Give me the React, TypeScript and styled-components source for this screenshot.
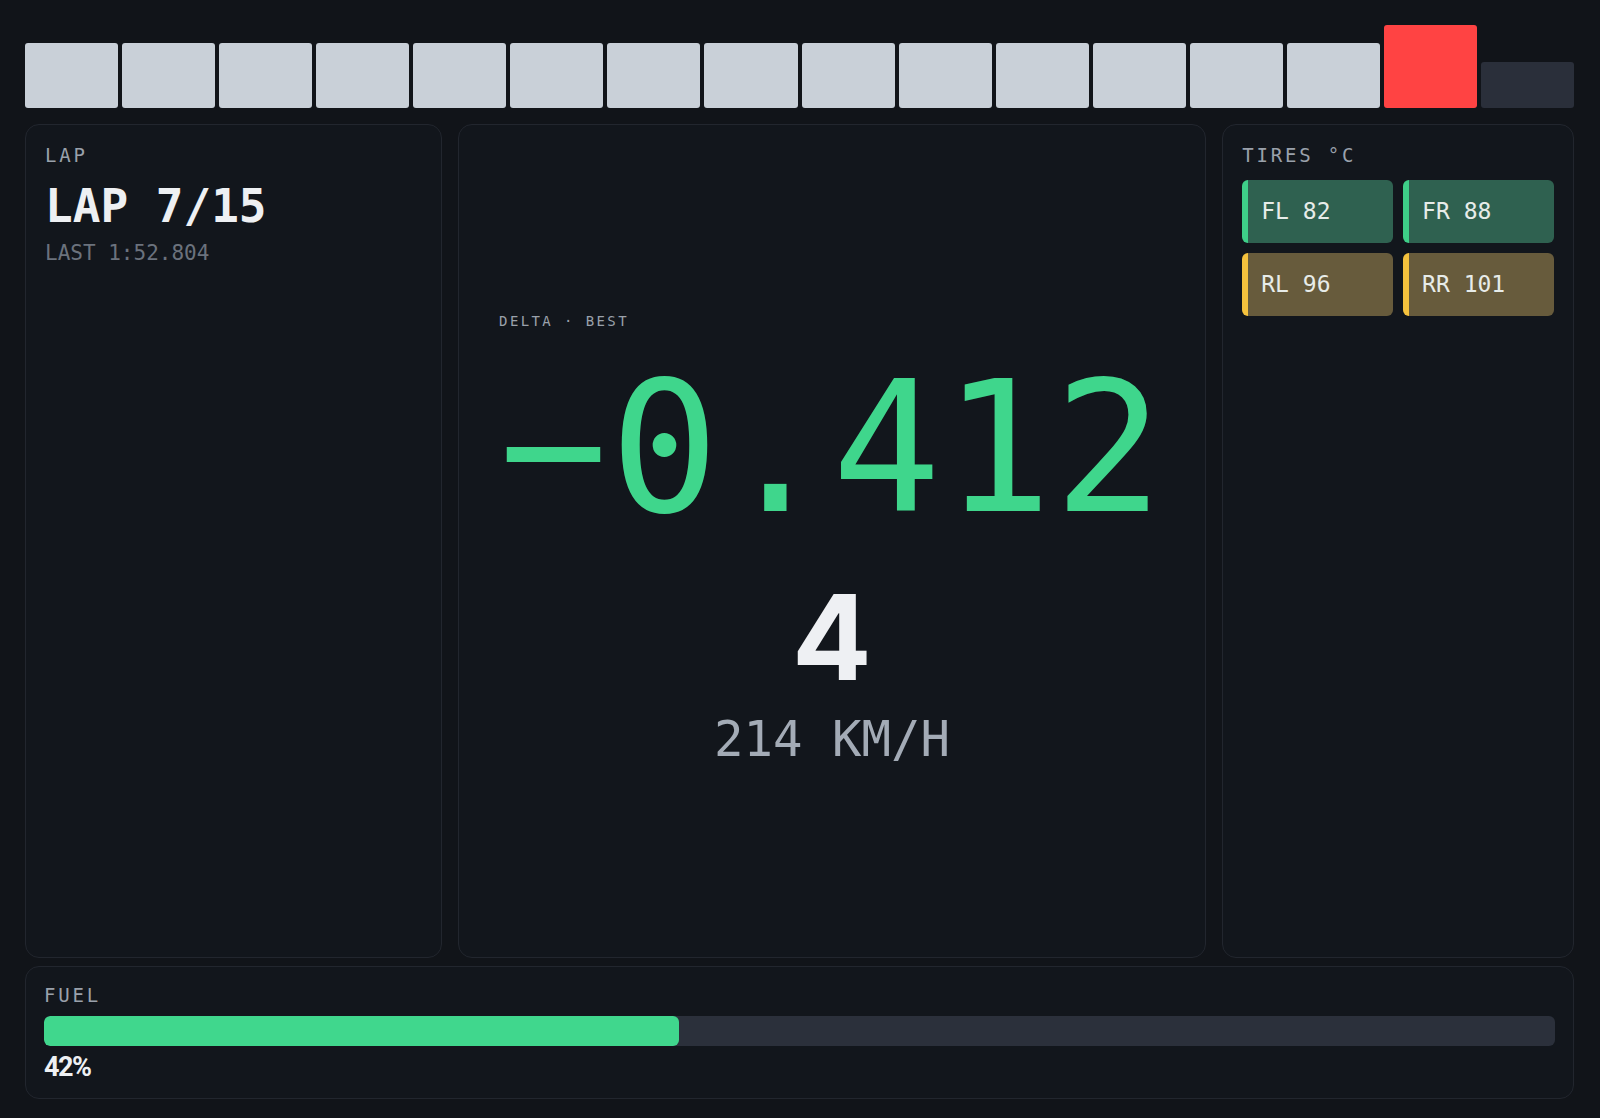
import styled, { createGlobalStyle } from 'styled-components'

const GlobalStyle = createGlobalStyle`
    * { box-sizing: border-box; }
    html, body { margin: 0; padding: 0; background: #111419; }
    body { font-family: "DejaVu Sans Mono", "Liberation Mono", monospace; color: #eef0f3; }
`

const MONO = `"DejaVu Sans Mono", "Liberation Mono", monospace`
const SANS = `Inter, Roboto, "Liberation Sans", sans-serif`

const Dash = styled.div`
    height: 100vh;
    display: flex;
    flex-direction: column;
    padding: 25px 26px 19px 25px;
    overflow: hidden;
`

const RevBar = styled.div`
    height: 83px;
    flex: none;
    display: flex;
    align-items: flex-end;
    gap: 4px;
    margin-bottom: 16px;
`

const Segment = styled.div<{ $state: 'lit' | 'limit' | 'off' }>`
    flex: 1;
    border-radius: 3px;
    height: ${p => (p.$state === 'limit' ? '83px' : p.$state === 'lit' ? '65px' : '46px')};
    background: ${p => (p.$state === 'limit' ? '#ff4343' : p.$state === 'lit' ? '#c9d0d8' : '#2a2f3a')};
`

const Panels = styled.div`
    flex: 1;
    min-height: 0;
    display: grid;
    grid-template-columns: 417fr 749fr 352fr;
    gap: 16px;
`

const Panel = styled.div`
    background: #12161c;
    border: 1px solid #22262e;
    border-radius: 14px;
    padding: 19px;
    display: flex;
    flex-direction: column;
`

const Label = styled.div`
    font-family: ${MONO};
    font-size: 19px;
    line-height: 1.2;
    letter-spacing: 2.8px;
    color: #9aa1ab;
`

const LapValue = styled.div`
    font-family: ${MONO};
    font-size: 46px;
    font-weight: 700;
    line-height: 1.2;
    color: #eef0f3;
    margin-top: 12px;
`

const LastLap = styled.div`
    font-family: ${MONO};
    font-size: 21px;
    line-height: 1.2;
    color: #6b727d;
    margin-top: 7px;
`

const CenterPanel = styled(Panel)`
    align-items: center;
    justify-content: center;
`

const DeltaBlock = styled.div`
    display: flex;
    flex-direction: column;
    align-items: flex-start;
`

const DeltaLabel = styled.div`
    font-family: ${MONO};
    font-size: 14px;
    line-height: 1.2;
    letter-spacing: 2.4px;
    color: #9aa1ab;
`

const DeltaValue = styled.div<{ $color: string }>`
    font-family: ${MONO};
    font-size: 181px;
    line-height: 1.2;
    letter-spacing: 2px;
    color: ${p => p.$color};
    margin-top: 11px;
    white-space: nowrap;
`

const Gear = styled.div`
    font-family: ${SANS};
    font-size: 118px;
    font-weight: 700;
    line-height: 1;
    color: #eef0f3;
    margin-top: 20px;
`

const Speed = styled.div`
    font-family: ${MONO};
    font-size: 49px;
    line-height: 1.2;
    color: #a3abb6;
    margin-top: 15px;
`

const TireGrid = styled.div`
    margin-top: 13px;
    display: grid;
    grid-template-columns: 1fr 1fr;
    gap: 10px;
`

const Tire = styled.div<{ $hot: boolean }>`
    height: 63px;
    border-radius: 6px;
    border-left: 6px solid ${p => (p.$hot ? '#f5c23d' : '#3ecf88')};
    background: ${p => (p.$hot ? '#675b3c' : '#2f6150')};
    display: flex;
    align-items: center;
    padding-left: 13px;
    font-family: ${MONO};
    font-size: 23px;
    color: #e7ece9;
    white-space: pre;
`

const FuelPanel = styled(Panel)`
    flex: none;
    margin-top: 8px;
    padding: 17px 18px 15px;
`

const FuelTrack = styled.div`
    margin-top: 9px;
    height: 30px;
    border-radius: 6px;
    background: #2b303b;
    overflow: hidden;
`

const FuelFill = styled.div`
    height: 100%;
    border-radius: 6px;
    background: #40d78d;
`

const FuelPct = styled.div`
    font-family: Roboto, ${SANS};
    font-size: 27px;
    font-weight: 700;
    line-height: 1.2;
    letter-spacing: -1.5px;
    color: #eef0f3;
    margin-top: 5px;
`

const rpmSegments = 16
const litSegments = 14

const tires = [
    { name: 'FL', temp: 82 },
    { name: 'FR', temp: 88 },
    { name: 'RL', temp: 96 },
    { name: 'RR', temp: 101 },
]

const App = () => {
    const delta = -0.412
    const fuel = 42

    return (
        <>
            <GlobalStyle />
            <Dash>
                <RevBar>
                    {Array.from({ length: rpmSegments }).map((_, i) => (
                        <Segment
                            key={i}
                            $state={i < litSegments ? 'lit' : i === litSegments ? 'limit' : 'off'}
                        />
                    ))}
                </RevBar>

                <Panels>
                    <Panel>
                        <Label>LAP</Label>
                        <LapValue>LAP 7/15</LapValue>
                        <LastLap>LAST 1:52.804</LastLap>
                    </Panel>

                    <CenterPanel>
                        <DeltaBlock>
                            <DeltaLabel>DELTA · BEST</DeltaLabel>
                            <DeltaValue $color={delta < 0 ? '#3fd68c' : '#ff4343'}>
                                {delta < 0 ? '−' : '+'}{Math.abs(delta).toFixed(3)}
                            </DeltaValue>
                        </DeltaBlock>
                        <Gear>4</Gear>
                        <Speed>214 KM/H</Speed>
                    </CenterPanel>

                    <Panel>
                        <Label>TIRES °C</Label>
                        <TireGrid>
                            {tires.map(t => (
                                <Tire key={t.name} $hot={t.temp > 90}>
                                    {t.name} {t.temp}
                                </Tire>
                            ))}
                        </TireGrid>
                    </Panel>
                </Panels>

                <FuelPanel>
                    <Label>FUEL</Label>
                    <FuelTrack>
                        <FuelFill style={{ width: `${fuel}%` }} />
                    </FuelTrack>
                    <FuelPct>{fuel}%</FuelPct>
                </FuelPanel>
            </Dash>
        </>
    )
}

export default App
